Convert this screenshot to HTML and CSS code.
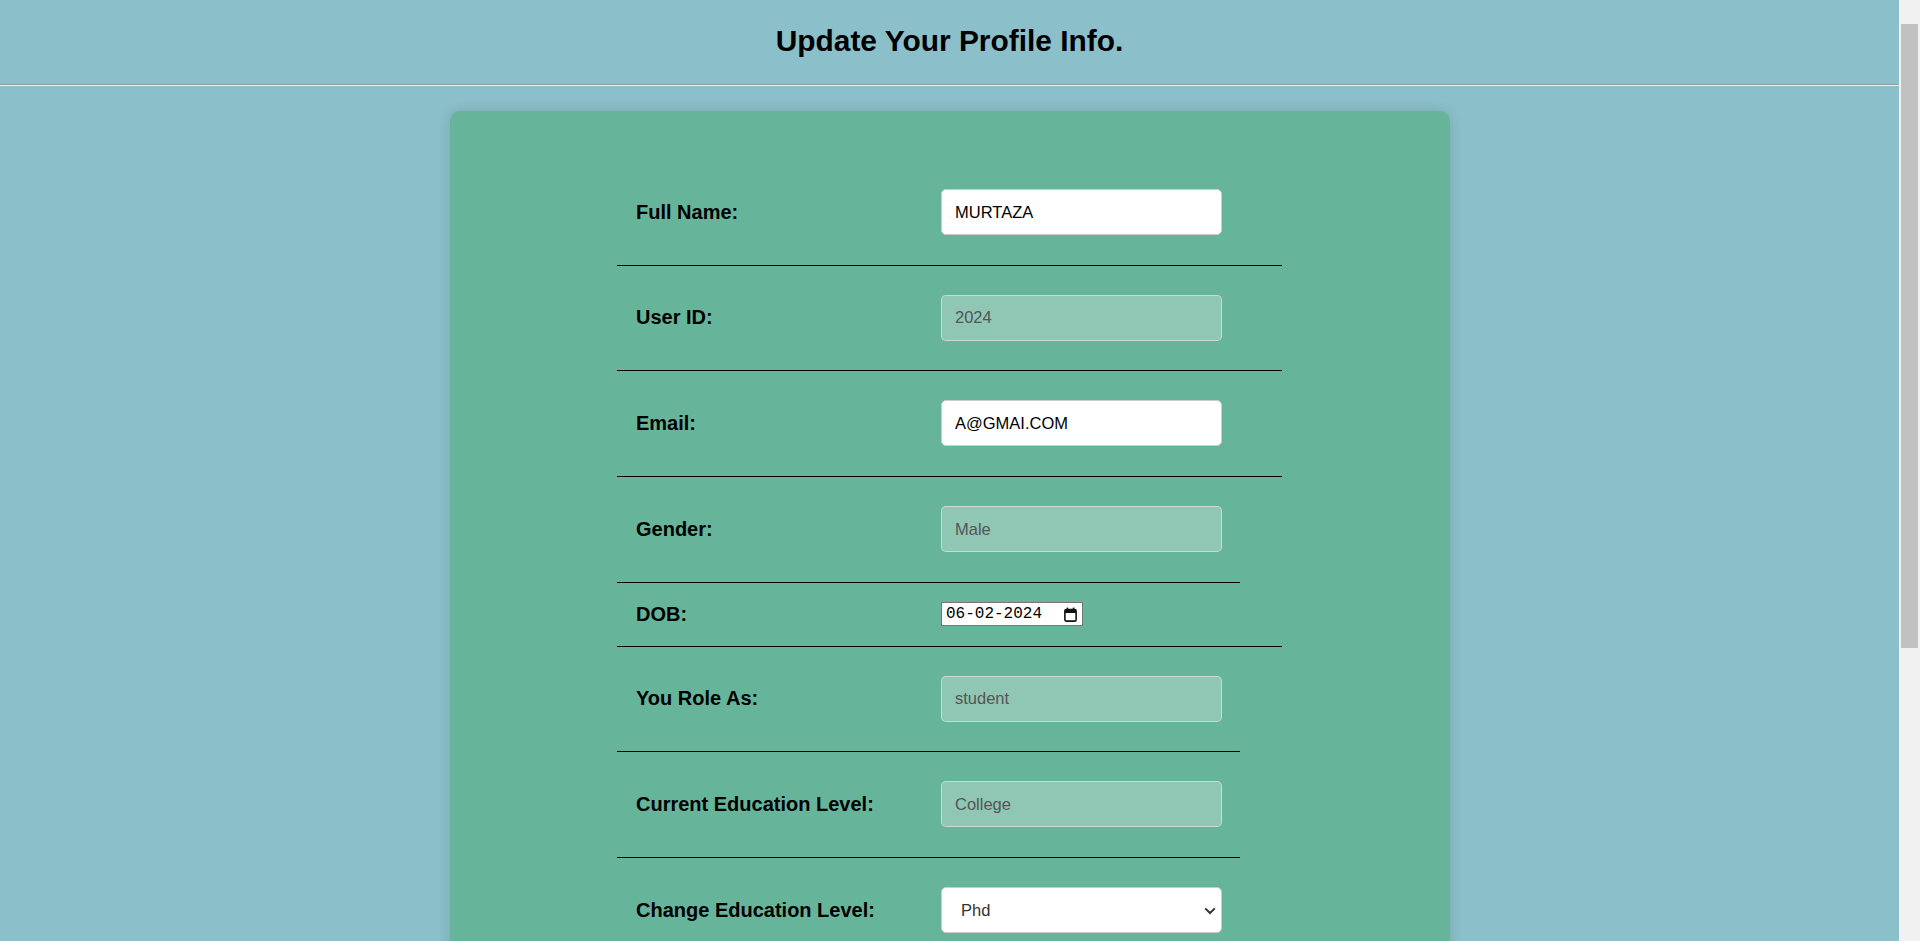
FILE: index.html
```
<!DOCTYPE html>
<html lang="en">
<head>
<meta charset="utf-8">
<title>Update Your Profile Info.</title>
<link rel="stylesheet" href="styles.css">
</head>
<body>
<div class="page">
<header class="page-header">
  <h1 class="page-title">Update Your Profile Info.</h1>
</header>
<hr class="divider">
<main class="card">
  <form class="profile-form">
    <div class="row">
      <label class="label" for="fullname">Full Name:</label>
      <input class="field" id="fullname" type="text" value="MURTAZA">
    </div>
    <div class="row">
      <label class="label" for="userid">User ID:</label>
      <input class="field" id="userid" type="text" value="2024" disabled>
    </div>
    <div class="row">
      <label class="label" for="email">Email:</label>
      <input class="field" id="email" type="text" value="A@GMAI.COM">
    </div>
    <div class="row short">
      <label class="label" for="gender">Gender:</label>
      <input class="field" id="gender" type="text" value="Male" disabled>
    </div>
    <div class="row compact">
      <label class="label" for="dob">DOB:</label>
      <div class="date-field">
        <input class="date-text" id="dob" type="text" value="06-02-2024">
        <svg class="cal-icon" width="13" height="15" viewBox="0 0 13 15" aria-hidden="true">
          <rect x="0.9" y="2.6" width="11.2" height="11.5" rx="1.4" fill="none" stroke="#111" stroke-width="1.6"/>
          <rect x="0.9" y="2.6" width="11.2" height="3.4" fill="#111"/>
          <rect x="2.6" y="0.6" width="1.6" height="3" fill="#111"/>
          <rect x="8.8" y="0.6" width="1.6" height="3" fill="#111"/>
        </svg>
      </div>
    </div>
    <div class="row short">
      <label class="label" for="role">You Role As:</label>
      <input class="field" id="role" type="text" value="student" disabled>
    </div>
    <div class="row short">
      <label class="label" for="curedu">Current Education Level:</label>
      <input class="field" id="curedu" type="text" value="College" disabled>
    </div>
    <div class="row">
      <label class="label" for="newedu">Change Education Level:</label>
      <div class="select-wrap">
        <select class="field select" id="newedu">
          <option>Phd</option>
          <option>Masters</option>
          <option>College</option>
          <option>School</option>
        </select>
        <svg class="chevron" width="12" height="8" viewBox="0 0 12 8" aria-hidden="true">
          <path d="M1.2 1.4 L6 6 L10.8 1.4" fill="none" stroke="#333" stroke-width="2"/>
        </svg>
      </div>
    </div>
    <div class="row">
      <label class="label" for="pass">New Password:</label>
      <input class="field" id="pass" type="password">
    </div>
    <div class="row">
      <label class="label" for="pass2">Confirm Password:</label>
      <input class="field" id="pass2" type="password">
    </div>
    <div class="actions">
      <button class="btn" type="submit">Update</button>
    </div>
  </form>
</main>
</div>
<div class="scroll-rail" aria-hidden="true">
  <div class="scroll-thumb"></div>
</div>
</body>
</html>
```
FILE: styles.css
```
html,
body {
  margin: 0;
  height: 100%;
  overflow: hidden;
}

body {
  display: flex;
  background: #8bbfc9;
  font-family: "Liberation Sans", Arial, sans-serif;
  color: #000;
}

.page {
  flex: 1;
  min-width: 0;
  height: 100vh;
  overflow-y: auto;
  scrollbar-width: none;
}
.page::-webkit-scrollbar {
  display: none;
}

.scroll-rail {
  flex: none;
  width: 21px;
  box-sizing: border-box;
  padding: 24px 2px 0;
  background: #f1f1f1;
}
.scroll-thumb {
  height: 624px;
  background: #c1c1c1;
}

.page-header {
  padding: 24px 0 26px;
  text-align: center;
}
.page-title {
  margin: 0;
  font-size: 29.9px;
  font-weight: bold;
  line-height: 34px;
}

.divider {
  margin: 0;
  height: 0;
  border: 0;
  border-top: 1px solid #9c9c9c;
  border-bottom: 1px solid #eeeeee;
}

.card {
  width: 1000px;
  margin: 25px auto 25px;
  padding: 49px 0 57px;
  background: #66b59b;
  border-radius: 10px;
  box-shadow: 0 0 14px rgba(0, 0, 0, 0.12);
}

.profile-form {
  width: 665px;
  margin: 0 auto;
}

.row {
  box-sizing: border-box;
  display: grid;
  grid-template-columns: 305px 281px;
  align-items: center;
  padding: 29px 0 29.7px 19px;
  border-bottom: 1px solid #000;
}
.row.short {
  width: 623px;
}
.row.compact {
  padding-top: 19.5px;
  padding-bottom: 19.5px;
}

.label {
  font-size: 20px;
  font-weight: bold;
}

.field {
  box-sizing: border-box;
  width: 281px;
  height: 46px;
  margin: 0;
  padding: 0 13px;
  border: 1px solid #cccccc;
  border-radius: 5px;
  background: #ffffff;
  font-family: "Liberation Sans", Arial, sans-serif;
  font-size: 16.5px;
  color: #000;
  outline: none;
}
.field:disabled {
  background: rgba(239, 239, 239, 0.3);
  border-color: rgba(220, 220, 220, 0.8);
  color: #555555;
}

.date-field {
  box-sizing: border-box;
  display: flex;
  align-items: center;
  width: 142px;
  height: 24px;
  padding: 0 5px 0 4px;
  border: 1px solid #767676;
  background: #fff;
}
.date-text {
  flex: 1;
  min-width: 0;
  margin: 0;
  padding: 0;
  border: 0;
  outline: none;
  background: transparent;
  font-family: "Liberation Mono", "DejaVu Sans Mono", monospace;
  font-size: 16px;
  color: #000;
}
.cal-icon {
  flex: none;
  display: block;
}

.select-wrap {
  position: relative;
  width: 281px;
}
.select {
  appearance: none;
  -webkit-appearance: none;
  padding-left: 19px;
  color: #333;
  cursor: pointer;
}
.chevron {
  position: absolute;
  right: 6px;
  top: 20px;
  pointer-events: none;
}

.actions {
  display: flex;
  justify-content: center;
  padding-top: 40px;
}
.btn {
  width: 200px;
  height: 46px;
  border: 0;
  border-radius: 5px;
  background: #2f7d64;
  color: #fff;
  font-family: "Liberation Sans", Arial, sans-serif;
  font-size: 18px;
  font-weight: bold;
}
```
